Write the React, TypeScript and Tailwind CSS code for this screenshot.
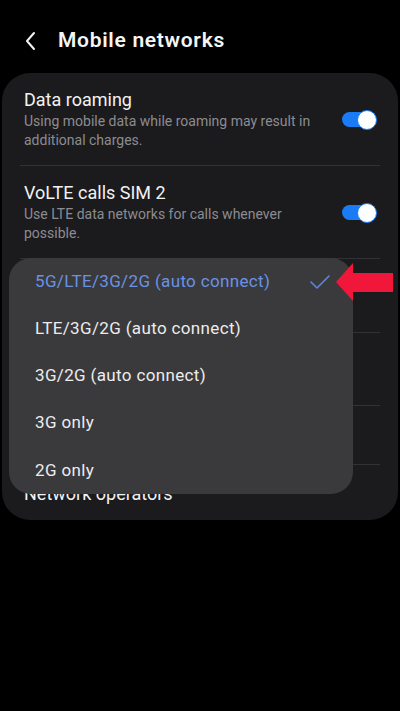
import React from 'react'

// ── Pieces ──────────────────────────────────────────────────

function Toggle() {
  return (
    <div className="relative w-[35px] h-[20px] flex items-center shrink-0">
      <div className="w-[33px] h-[15px] rounded-full bg-[#1a7bf6]" />
      <div className="absolute right-0 top-0 w-[20px] h-[20px] rounded-full bg-white border-[1.5px] border-[#1a7bf6]" />
    </div>
  )
}

function Divider() {
  return <div className="mx-[18px] h-px bg-[#323236]" />
}

interface RowProps {
  title?: string
  sub?: string
  toggle?: boolean
  className?: string
}

function Row({ title, sub, toggle, className = '' }: RowProps) {
  return (
    <div className={`flex items-center pl-[22px] pr-[21px] ${className}`}>
      <div className="w-[306px]">
        {title && <div className="text-[18px] leading-[22px] text-[#f2f2f2]">{title}</div>}
        {sub && <div className="mt-[1px] text-[14px] leading-[19px] text-[#8c8c90]">{sub}</div>}
      </div>
      <div className="flex-1" />
      {toggle && <Toggle />}
    </div>
  )
}

const modes = [
  '5G/LTE/3G/2G (auto connect)',
  'LTE/3G/2G (auto connect)',
  '3G/2G (auto connect)',
  '3G only',
  '2G only',
]

// ── App ─────────────────────────────────────────────────────

export default function App() {
  return (
    <div className="relative w-[400px] h-[711px] overflow-hidden bg-black font-['Roboto',sans-serif]">
      {/* header */}
      <div className="h-[73px] pt-[8px] flex items-center">
        <svg width="12" height="20" viewBox="0 0 12 20" className="ml-[25px]">
          <path d="M9 2 L2 10 L9 18" fill="none" stroke="#f2f2f2" strokeWidth="2" strokeLinecap="round" strokeLinejoin="round" />
        </svg>
        <div className="ml-[21px] text-[21px] font-semibold text-[#f5f5f5] tracking-[0.7px]">Mobile networks</div>
      </div>

      {/* settings card */}
      <div className="relative mx-[2px] w-[396px] h-[447px] rounded-[28px] bg-[#1b1b1e]">
        <Row className="pt-[16px] pb-[15px]" title="Data roaming" sub="Using mobile data while roaming may result in additional charges." toggle />
        <Divider />
        <Row className="pt-[16px] pb-[15px]" title="VoLTE calls SIM 2" sub="Use LTE data networks for calls whenever possible." toggle />
        <Divider />
        {/* rows hidden under the dropdown */}
        <Row className="h-[73px]" />
        <Divider />
        <Row className="h-[72px]" />
        <Divider />
        <Row className="h-[58px]" />
        <Divider />
        <Row className="h-[58px]" title="Network operators" />

        {/* network mode dropdown */}
        <div className="absolute left-[7px] top-[185px] w-[344px] h-[236px] rounded-[22px] bg-[#3a3a3c] flex flex-col">
          {modes.map((m, i) => (
            <div key={m} className="h-[47.25px] flex items-center pl-[26px] pr-[22px]">
              <span className={`text-[17px] tracking-[0.35px] ${i === 0 ? 'text-[#6a92e4]' : 'text-[#ececec]'}`}>{m}</span>
              <div className="flex-1" />
              {i === 0 && (
                <svg width="22" height="16" viewBox="0 0 22 16">
                  <path d="M2 8 L8 14 L20 2" fill="none" stroke="#5b86dc" strokeWidth="1.6" strokeLinecap="round" strokeLinejoin="round" />
                </svg>
              )}
            </div>
          ))}
        </div>
      </div>

      {/* red pointer arrow */}
      <svg width="57" height="38" viewBox="0 0 57 38" className="absolute left-[336px] top-[263px]">
        <polygon points="0,19 17,0 17,10 57,10 57,29 17,29 17,38" fill="#f0173b" />
      </svg>
    </div>
  )
}
